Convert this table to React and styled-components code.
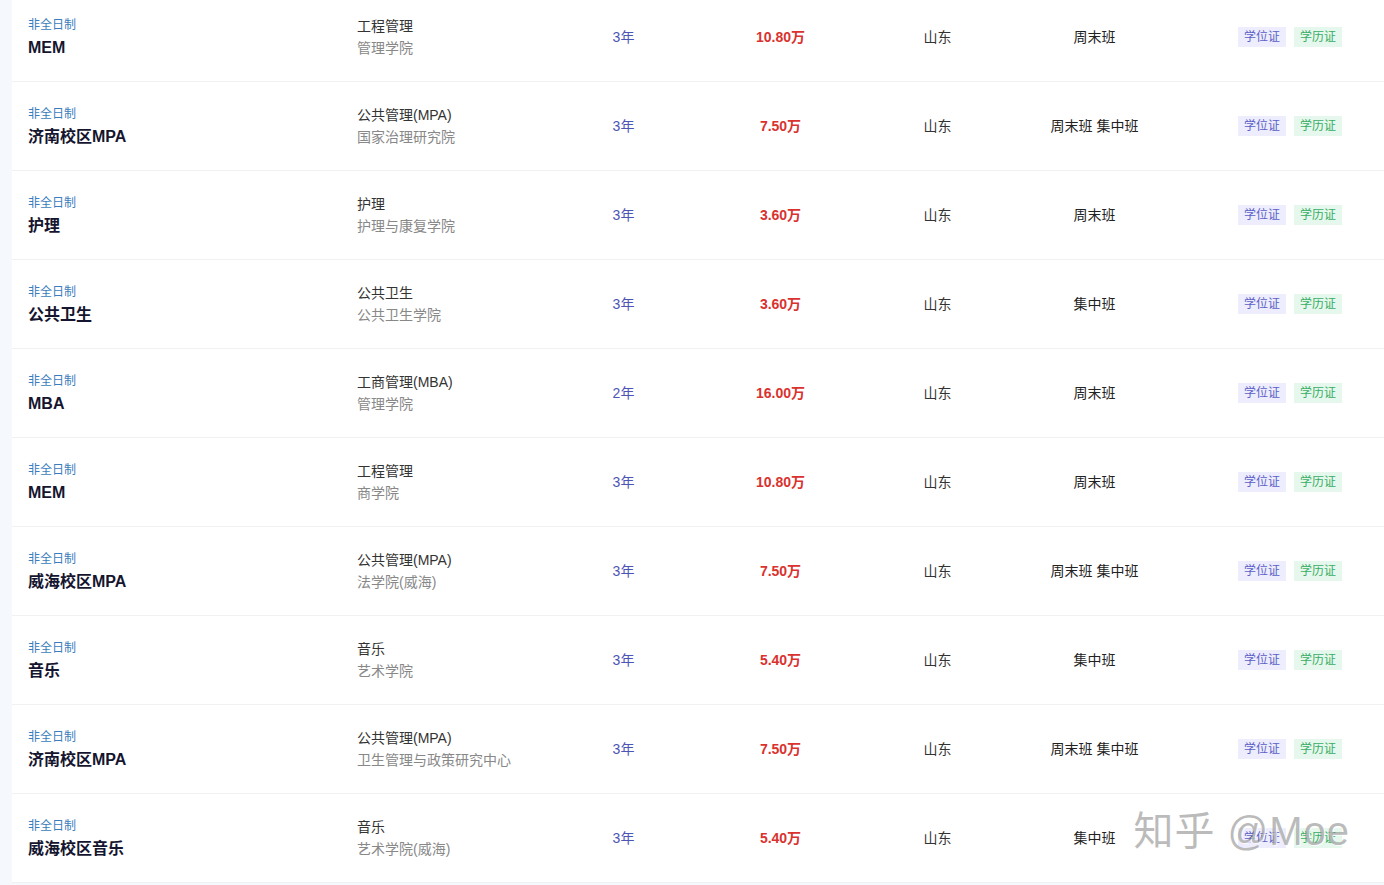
import React from 'react';
import styled, { createGlobalStyle } from 'styled-components';

const GlobalStyle = createGlobalStyle`
  html, body {
    margin: 0;
    padding: 0;
    background: #f5f8fc;
    font-family: "Liberation Sans", "Noto Sans CJK SC", sans-serif;
    overflow: hidden;
  }
`;

const Page = styled.div`
  position: relative;
  height: 885px;
  overflow: hidden;
`;

const Table = styled.div`
  margin: -7px 0 0 12px;
  background: #fff;
`;

const Row = styled.div`
  display: grid;
  grid-template-columns: 329px 188px 157px 157px 157px 157px 1fr;
  align-items: center;
  height: 88px;
  padding-left: 16px;
  border-bottom: 1px solid #f0f1f3;
`;

const NameCell = styled.div`
  display: flex;
  flex-direction: column;
`;

const Mode = styled.span`
  font-size: 12px;
  line-height: 20px;
  color: #3b7cbc;
`;

const Name = styled.span`
  margin-top: 1px;
  font-size: 16px;
  line-height: 24px;
  font-weight: 700;
  color: #15152f;
`;

const MajorCell = styled.div`
  display: flex;
  flex-direction: column;
  font-size: 14px;
  line-height: 22px;
`;

const Major = styled.span`
  color: #333;
`;

const School = styled.span`
  color: #888;
`;

const Cell = styled.div`
  text-align: center;
  font-size: 14px;
  line-height: 20px;
  margin-top: -1px;
  color: ${(p) => p.color || '#333'};
  font-weight: ${(p) => (p.bold ? 700 : 400)};
`;

const Tags = styled.div`
  display: flex;
  gap: 8px;
  padding-left: 65px;
`;

const Tag = styled.span`
  font-size: 12px;
  line-height: 19px;
  padding: 1px 6px 0;
  color: ${(p) => (p.green ? '#38ad64' : '#5b5fc7')};
  background: ${(p) => (p.green ? '#e6f8ed' : '#ededfd')};
`;

const Watermark = styled.div`
  position: absolute;
  right: 34px;
  bottom: 32px;
  font-size: 40px;
  line-height: 44px;
  letter-spacing: 1px;
  color: rgba(120, 120, 120, 0.5);
  text-shadow: 1px 1px 0 rgba(255, 255, 255, 0.8);
  white-space: nowrap;
  pointer-events: none;
`;

const rows = [
  { name: 'MEM', major: '工程管理', school: '管理学院', years: '3年', price: '10.80万', class: '周末班' },
  { name: '济南校区MPA', major: '公共管理(MPA)', school: '国家治理研究院', years: '3年', price: '7.50万', class: '周末班 集中班' },
  { name: '护理', major: '护理', school: '护理与康复学院', years: '3年', price: '3.60万', class: '周末班' },
  { name: '公共卫生', major: '公共卫生', school: '公共卫生学院', years: '3年', price: '3.60万', class: '集中班' },
  { name: 'MBA', major: '工商管理(MBA)', school: '管理学院', years: '2年', price: '16.00万', class: '周末班' },
  { name: 'MEM', major: '工程管理', school: '商学院', years: '3年', price: '10.80万', class: '周末班' },
  { name: '威海校区MPA', major: '公共管理(MPA)', school: '法学院(威海)', years: '3年', price: '7.50万', class: '周末班 集中班' },
  { name: '音乐', major: '音乐', school: '艺术学院', years: '3年', price: '5.40万', class: '集中班' },
  { name: '济南校区MPA', major: '公共管理(MPA)', school: '卫生管理与政策研究中心', years: '3年', price: '7.50万', class: '周末班 集中班' },
  { name: '威海校区音乐', major: '音乐', school: '艺术学院(威海)', years: '3年', price: '5.40万', class: '集中班' },
];

export default function App() {
  return (
    <Page>
      <GlobalStyle />
      <Table>
        {rows.map((r, i) => (
          <Row key={i}>
            <NameCell>
              <Mode>非全日制</Mode>
              <Name>{r.name}</Name>
            </NameCell>
            <MajorCell>
              <Major>{r.major}</Major>
              <School>{r.school}</School>
            </MajorCell>
            <Cell color="#4d54b5">{r.years}</Cell>
            <Cell color="#d9322f" bold>{r.price}</Cell>
            <Cell>山东</Cell>
            <Cell color="#222">{r.class}</Cell>
            <Tags>
              <Tag>学位证</Tag>
              <Tag green>学历证</Tag>
            </Tags>
          </Row>
        ))}
      </Table>
      <Watermark>知乎 @Moe</Watermark>
    </Page>
  );
}
